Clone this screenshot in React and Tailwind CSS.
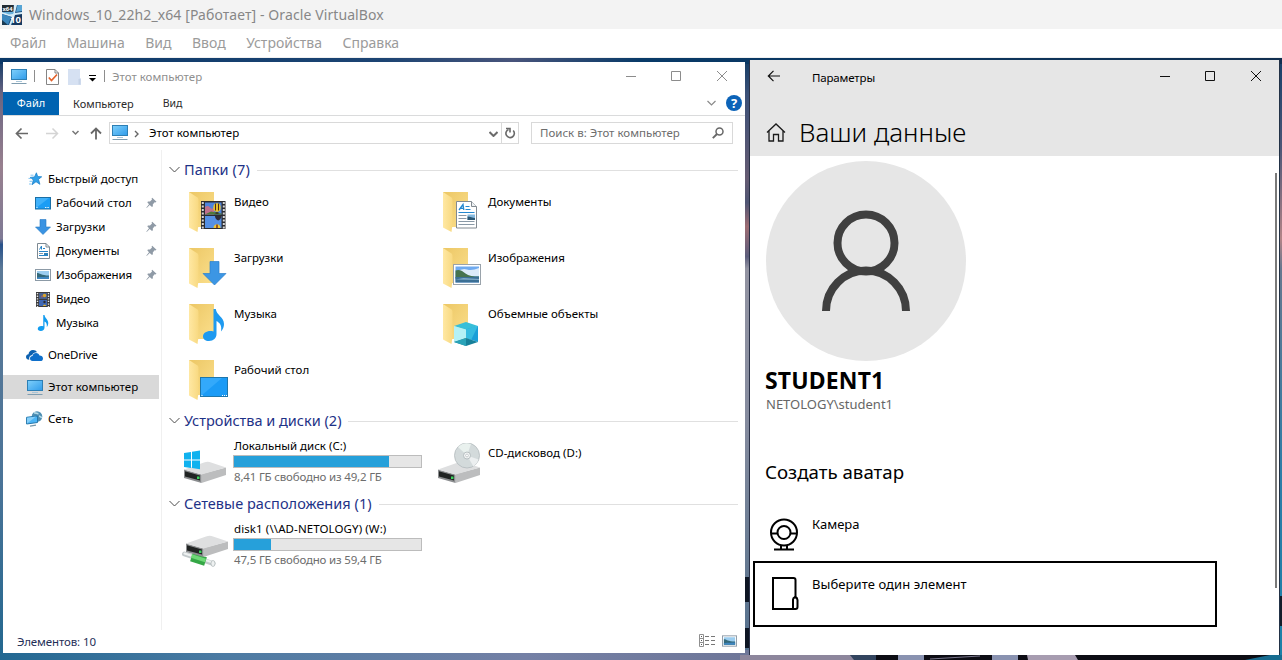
import React from "react";

/* ---------- small icons ---------- */

function PcIcon() {
  return (
    <svg width="18" height="17" viewBox="0 0 18 17" className="shrink-0">
      <defs>
        <linearGradient id="pcg" x1="0" y1="0" x2="1" y2="1">
          <stop offset="0" stopColor="#7fd0fb" />
          <stop offset="1" stopColor="#2f9bea" />
        </linearGradient>
      </defs>
      <rect x="1.500" y="1.500" width="15" height="10" fill="url(#pcg)" stroke="#2d7fb5" />
      <path d="M6 13.500h6" stroke="#a9c6d8" />
      <path d="M1.500 15.500h15" stroke="#7f9db0" />
    </svg>
  );
}

function VmIcon() {
  return (
    <svg width="20" height="20" viewBox="0 0 20 20" className="shrink-0">
      <rect width="20" height="20" fill="#1c4f80" />
      <path d="M12 0h3l-2 8 7-1v4l-8 1-3 8H7l3-8-10-3V7l10 2z" fill="#d5ecf8" />
      <path d="M0 9l9 3-3 8H0z" fill="#3c87bd" />
      <path d="M0 7h12l-1 2-4 .5z" fill="#69b2dd" />
      <path d="M15.500 0H20v6l-6 1z" fill="#57a5d5" />
      <path d="M13 10l7-1v11H10z" fill="#163a61" />
      <path d="M0 15l6 5H0z" fill="#1a3a52" />
      <rect width="11.500" height="6.500" fill="#232c33" />
      <text x="0.500" y="5.500" fontSize="5.800" fontWeight="700" fill="#fff" fontFamily="Noto Sans, sans-serif">x64</text>
      <text x="8" y="17.500" fontSize="9.500" fontWeight="700" fill="#fff" fontFamily="Noto Sans, sans-serif">10</text>
    </svg>
  );
}

function Pin() {
  return (
    <svg width="11" height="12" viewBox="0 0 11 12" className="shrink-0">
      <path d="M6.200 0.800L10.500 4.800 9.300 5.600 8.600 5.200 6.800 7.400 6.900 9.300 6 10 3.700 7.900 0.700 11 0.400 10.600 3 7.200 1.300 5.300 2 4.400 4 4.500 6 2.600 5.600 1.600Z" fill="#8f9aa6" />
    </svg>
  );
}

function StarIcon() {
  return (
    <svg width="16" height="14" viewBox="0 0 16 14" className="shrink-0">
      <path d="M9.400 0.800l1.300 3.800 4 .2-3.200 2.500 1.400 5-3.900-2.600-3.900 3 1.300-4.800L3.200 5.400l4.300-.4z" fill="#2f9fe8" stroke="#1d83cc" strokeWidth="0.800" />
      <path d="M3.500 3.200h3M1.500 6.400h3.500M2.500 9.300h3M2 12h2.500" stroke="#63b8f0" strokeWidth="0.800" />
    </svg>
  );
}

function DesktopIcon() {
  return (
    <svg width="16" height="13" viewBox="0 0 16 13" className="shrink-0">
      <rect x="0.500" y="0.500" width="15" height="11.500" fill="#1b9df5" stroke="#1a6fa6" />
      <path d="M1 11L14 1H1z" fill="#40b1fa" />
      <path d="M1.500 10.500h1M10 10.500h4" stroke="#e8f6ff" strokeDasharray="1 0.600" />
    </svg>
  );
}

function DownIcon() {
  return (
    <svg width="16" height="16" viewBox="0 0 16 16" className="shrink-0">
      <path d="M5 0.500h6v7.500h4.500L8 15.500.5 8H5z" fill="#3a93e2" stroke="#2678c4" strokeWidth="0.600" />
    </svg>
  );
}

function DocIcon() {
  return (
    <svg width="13" height="16" viewBox="0 0 13 16" className="shrink-0">
      <path d="M.5.500h8.500l3.500 3.500v11.500H.5z" fill="#fff" stroke="#7d8992" />
      <path d="M9 .5V4h3.500" fill="none" stroke="#7d8992" />
      <path d="M2.500 6.500L4.500 3v3.500M6 5.500h2M2 8.500h9M2 12.500h9" stroke="#2684c8" fill="none" />
      <path d="M2 10.500h4" stroke="#8a99a5" />
      <rect x="7" y="10" width="4" height="2" fill="#2f84ba" />
    </svg>
  );
}

function PictureIcon({ w = 16, h = 12 }) {
  return (
    <svg width={w} height={h} viewBox="0 0 16 12" className="shrink-0">
      <rect x="0.500" y="0.500" width="15" height="11" fill="#fff" stroke="#8c9aa6" />
      <rect x="2" y="2" width="12" height="8" fill="#9bcdf0" />
      <path d="M2 4c3 0 4 2.500 12 2.500V10H2z" fill="#33697a" />
      <path d="M2 8.500c5-1 8-.5 12-.8V10H2z" fill="#3f86c0" />
    </svg>
  );
}

function FilmIcon() {
  return (
    <svg width="14" height="15" viewBox="0 0 14 15" className="shrink-0">
      <rect width="14" height="15" fill="#3b3b3d" />
      <path d="M1.500 1v14M12.500 1v14" stroke="#e8e8e8" strokeWidth="1.400" strokeDasharray="1.300 1.300" />
      <rect x="3" y="1" width="8" height="6" fill="#47608f" />
      <rect x="3" y="8" width="8" height="6" fill="#4068b4" />
      <circle cx="8.500" cy="3.500" r="1.800" fill="#d9a62c" />
      <circle cx="6" cy="4.500" r="1.100" fill="#95606c" />
      <circle cx="8.500" cy="10" r="1.200" fill="#2b2b30" />
      <path d="M7 14c0-1.800 3-1.800 3 0z" fill="#e6b833" />
    </svg>
  );
}

function NoteIcon() {
  return (
    <svg width="12" height="16" viewBox="0 0 21 32" className="shrink-0">
      <path d="M11 0h2.500c.5 6 7.500 9 7.500 16 0 3-1 6-3 8 1-6-1-9-4.500-11v12c0 4-3 7-7.500 7C2 32 0 30 0 27.500c0-4 5-7 11-5z" fill="#119cf0" />
    </svg>
  );
}

function CloudIcon() {
  return (
    <svg width="17" height="11" viewBox="0 0 17 11" className="shrink-0">
      <path d="M3.300 9.700C1.200 9.700 0 8.600 0 7c0-1.500 1-2.500 2.500-2.700C2.700 1.700 4.600 0 7 0c1.900 0 3.200.9 4 2.300-2.300-.2-4 .8-4.800 2.600C4 5.200 2.600 7.200 3.300 9.700z" fill="#0d61b0" />
      <path d="M6.500 11C4.900 11 4 10 4 8.600c0-1.500 1-2.500 2.500-2.600C6.800 4.200 8.100 3 10 3c1.800 0 3 1 3.500 2.500C15.600 5.600 17 6.700 17 8.400c0 1.600-1 2.600-2.600 2.600z" fill="#0f6fca" />
    </svg>
  );
}

function NetIcon() {
  return (
    <svg width="17" height="16" viewBox="0 0 17 16" className="shrink-0">
      <circle cx="11" cy="5.500" r="5.300" fill="#4f8fb3" />
      <path d="M8 2c2-.5 3 1 4.500.5M13 5c1 0 1.500 1.500 3 1.500" stroke="#b5dbe9" strokeWidth="1.600" fill="none" />
      <path d="M.6 6.300L11.500 5v6.500L.6 13z" fill="#4db5f5" stroke="#2577ab" />
      <path d="M1 12.400L10 5.500l-9 1.200z" fill="#86cff9" />
      <path d="M4 15.200l6-1" stroke="#7897a8" strokeWidth="1.300" />
    </svg>
  );
}

function Chevron({ className, size = 8, stroke = 1.500 }) {
  return (
    <svg width={size} height={size / 2 + 2} viewBox={`0 0 ${size} ${size / 2 + 2}`} className={className}>
      <path d={`M0.500 1l${size / 2 - 0.500} ${size / 2 - 0.500} ${size / 2 - 0.500} -${size / 2 - 0.500}`} fill="none" stroke="currentColor" strokeWidth={stroke} />
    </svg>
  );
}

function Caption({ stroke, className }) {
  return (
    <svg width="102" height="12" viewBox="0 0 102 12" className={className}>
      <path d="M0 6.500h10M45.500 1.500h9v9h-9zM91 1l10 10M101 1L91 11" fill="none" stroke={stroke} />
    </svg>
  );
}

/* ---------- large icons ---------- */

function Folder({ children }) {
  return (
    <svg width="45" height="44" viewBox="0 0 45 44" className="shrink-0">
      <defs>
        <linearGradient id="fb" x1="0" y1="0" x2="1" y2="1">
          <stop offset="0" stopColor="#ecc765" />
          <stop offset="1" stopColor="#fbdf8c" />
        </linearGradient>
        <linearGradient id="ff" x1="0" y1="0" x2="1" y2="0">
          <stop offset="0" stopColor="#ffe8a3" />
          <stop offset="1" stopColor="#f8d981" />
        </linearGradient>
      </defs>
      <path d="M0 0h25v35H0z" fill="url(#fb)" />
      <path d="M0 0l8.500 5.500q1 .8 1 2.500v24.500l-1 7.500L0 35.500z" fill="url(#ff)" />
      {children}
    </svg>
  );
}

const overlays = {
  video: (
    <g>
      <rect x="12" y="9" width="24.500" height="28" fill="#2c2c30" />
      <path d="M13.800 10v27M34.800 10v27" stroke="#d7d7d7" strokeWidth="2" strokeDasharray="2 1.500" />
      <rect x="16" y="10.500" width="16.500" height="12" fill="#4f84dc" />
      <path d="M16 15q3-2 5 .5t4 0v7h-9z" fill="#c0708c" />
      <path d="M16 22.500l6-3 10.500 2v1z" fill="#4f7a3a" />
      <rect x="16" y="24" width="16.500" height="12" fill="#5590e4" />
      <ellipse cx="28" cy="15.500" rx="3.700" ry="4.300" fill="#f0c92d" />
      <path d="M26.500 11.500v7M29.500 11.500v7" stroke="#4a2a1e" strokeWidth="1.100" />
      <path d="M26.500 21h3" stroke="#3a2a1e" strokeWidth="1.500" />
      <path d="M26 24h6.500c0 2.500-2 4-3.200 4.500-1.500-.5-3.300-2-3.300-4.500z" fill="#2f2d39" />
      <path d="M24.500 36c0-5 7-5 7 0z" fill="#f0c832" />
      <path d="M28 32.500V36" stroke="#7b2f22" strokeWidth="1.500" />
    </g>
  ),
  down: <path d="M21 13.500h9v12h7L25.500 37 14 25.500h7z" fill="#3c96e4" stroke="#2a80cc" strokeWidth="0.700" />,
  music: (
    <path d="M24.500 5h2.300c.5 6 8.200 8 8.200 15 0 3-1 5-3 7.500 1-6-1-8.500-4.500-10.500v13c0 4-3 7-7.500 7-3.800 0-6-2-6-4.500 0-4 5-6.500 10.500-5z" fill="#1e9af0" />
  ),
  desktop: (
    <g>
      <rect x="11.500" y="17.500" width="27" height="19" fill="#1b9bf6" stroke="#1e76ab" />
      <path d="M12 36L33 18H12z" fill="#33a9fb" />
      <path d="M12.500 35.500h1M33 35.500h5.500" stroke="#fff" strokeDasharray="1 1" />
    </g>
  ),
  docs: (
    <g>
      <path d="M13.500 9.500h15l5 5v21.500h-20z" fill="#fff" stroke="#828a91" />
      <path d="M28.500 9.500v5h5" fill="#eef1f3" stroke="#828a91" />
      <path d="M16 18l4-5.500.8 5.500M17.500 16.300h3" fill="none" stroke="#2488d0" strokeWidth="1.300" />
      <path d="M22.500 14.500h4M22.500 17.500h5M15.500 20.500h16" stroke="#2488d0" />
      <path d="M15.500 23.500h8M15.500 26.500h8M15.500 29.500h16M15.500 32.500h16" stroke="#8a99a6" />
      <rect x="24.500" y="22.500" width="7.500" height="5.500" fill="#86b9de" />
      <path d="M24.500 24.500c3 0 5 1.500 7.500 1.500v2h-7.500z" fill="#2a5672" />
    </g>
  ),
  pics: (
    <g>
      <rect x="10.500" y="16.500" width="27" height="20" fill="#fff" stroke="#9aa3ab" />
      <rect x="12.500" y="18.500" width="23.500" height="16" fill="#6faaf0" />
      <path d="M14 24q5-4 10-2.500t12-1.500v8H14z" fill="#dcebfa" />
      <path d="M12.500 22.500c4-1.500 7 .5 10 3s8 3 13.500 3v2H12.500z" fill="#46734e" />
      <path d="M12.500 29H36v5.500H12.500z" fill="#3b6f95" />
      <path d="M12.500 31.500l8-1.500 15.500 1v1z" fill="#7fabc8" />
    </g>
  ),
  cube: (
    <g>
      <path d="M11 22l12-4 12 4-12 4z" fill="#37bfd8" />
      <path d="M11 22l12 3.500V34l-12 4z" fill="#b4f1f5" />
      <path d="M23 25.500L35 22v16l-12-4z" fill="#1a9fd8" />
      <path d="M23 25.500L35 22l-7 14-5-2z" fill="#36bce0" />
      <path d="M11 38l12-4 12 4-12 4z" fill="#16809a" />
      <path d="M11 38l12-4v8z" fill="#2aa3b8" />
    </g>
  ),
};

function DriveBody() {
  return (
    <g>
      <path d="M17.500 13L42 6.500V14L17.500 22z" fill="#bcbdbe" />
      <path d="M0 8.500l17.500 5V22L0 17z" fill="#8b8d8f" />
      <path d="M1 10.300l15 4.200v5L1 15.500z" fill="#202322" />
      <path d="M0 8.500L20 1.500Q24 0 27 1.500L42 6.500 17.500 13.500z" fill="#dedfe0" />
      <rect x="13" y="15.500" width="2.500" height="2.500" fill="#3ad25c" />
    </g>
  );
}

function DiskIcon() {
  return (
    <svg width="47" height="40" viewBox="0 0 47 40" className="shrink-0">
      <g transform="translate(2 13)"><DriveBody /></g>
      <path d="M2 5l7-1v7.500H2zM10 3.800L18 2.500v9h-8zM2 12.500h7V20l-7-1zM10 12.500h8v8.700L10 20z" fill="#10b2ef" />
    </svg>
  );
}

function CdIcon() {
  return (
    <svg width="47" height="44" viewBox="0 0 47 44" className="shrink-0">
      <g transform="translate(2 18)"><DriveBody /></g>
      <circle cx="31" cy="12.500" r="12.500" fill="#d3dadb" stroke="#b3babd" strokeWidth="0.800" />
      <path d="M31 12.500L22 4A12.500 12.500 0 0 1 35 1z" fill="#e9f1ee" />
      <path d="M31 12.500l11.500 4a12 12 0 0 1-5 7z" fill="#eceff0" />
      <circle cx="31" cy="12.500" r="3.500" fill="#f3f5f5" stroke="#a9b2b5" strokeWidth="0.800" />
      <circle cx="31" cy="12.500" r="1.400" fill="#fff" stroke="#a9b2b5" strokeWidth="0.600" />
    </svg>
  );
}

function NetDiskIcon() {
  return (
    <svg width="47" height="40" viewBox="0 0 47 40" className="shrink-0">
      <path d="M2.500 23L31 32.500" stroke="#c3cacc" strokeWidth="5" strokeLinecap="round" />
      <path d="M2.500 22.500L31 31.500" stroke="#eef1f1" strokeWidth="2" strokeLinecap="round" />
      <path d="M9.500 26l14 4.500" stroke="#35a746" strokeWidth="9" />
      <path d="M9.500 25l14 4.500" stroke="#6ed977" strokeWidth="3.500" />
      <g transform="translate(4 4)"><DriveBody /></g>
      <ellipse cx="31" cy="32.500" rx="2" ry="3" fill="#eef1f1" stroke="#aab3b5" strokeWidth="0.700" />
    </svg>
  );
}

/* ---------- desktop wallpaper ---------- */

function Wallpaper() {
  return (
    <svg width="1282" height="602" viewBox="0 58 1282 602" className="absolute inset-0">
      <defs>
        <linearGradient id="wl" x1="0" y1="0" x2="0" y2="1">
          <stop offset="0" stopColor="#0b3866" />
          <stop offset="0.060" stopColor="#6a6582" />
          <stop offset="0.180" stopColor="#98808f" />
          <stop offset="0.300" stopColor="#7f7a95" />
          <stop offset="0.310" stopColor="#28518a" />
          <stop offset="0.350" stopColor="#5c7a98" />
          <stop offset="0.700" stopColor="#4b7498" />
          <stop offset="1" stopColor="#22678f" />
        </linearGradient>
        <linearGradient id="wm" x1="0" y1="0" x2="0" y2="1">
          <stop offset="0" stopColor="#123b63" />
          <stop offset="0.060" stopColor="#3b5077" />
          <stop offset="0.200" stopColor="#655b72" />
          <stop offset="0.240" stopColor="#4f5573" />
          <stop offset="0.280" stopColor="#9c6b72" />
          <stop offset="0.330" stopColor="#5c5d7c" />
          <stop offset="0.350" stopColor="#9293a1" />
          <stop offset="0.600" stopColor="#858b9e" />
          <stop offset="0.850" stopColor="#657991" />
          <stop offset="1" stopColor="#53708e" />
        </linearGradient>
        <linearGradient id="wr" x1="0" y1="0" x2="0" y2="1">
          <stop offset="0" stopColor="#15406a" />
          <stop offset="0.150" stopColor="#4d5677" />
          <stop offset="0.300" stopColor="#b38487" />
          <stop offset="0.350" stopColor="#66788f" />
          <stop offset="0.700" stopColor="#2d7ea8" />
          <stop offset="1" stopColor="#1c81a8" />
        </linearGradient>
        <linearGradient id="wb" x1="0" y1="0" x2="1" y2="0">
          <stop offset="0" stopColor="#226892" />
          <stop offset="0.300" stopColor="#4c7ba3" />
          <stop offset="0.700" stopColor="#7480a5" />
          <stop offset="1" stopColor="#6e7698" />
        </linearGradient>
        <linearGradient id="wt" x1="0" y1="0" x2="1" y2="0">
          <stop offset="0" stopColor="#0a3868" />
          <stop offset="0.300" stopColor="#1c4473" />
          <stop offset="0.400" stopColor="#48547b" />
          <stop offset="0.500" stopColor="#083a68" />
          <stop offset="1" stopColor="#112f50" />
        </linearGradient>
      </defs>
      <rect x="0" y="58" width="10" height="602" fill="url(#wl)" />
      <rect x="740" y="58" width="20" height="602" fill="url(#wm)" />
      <rect x="1270" y="58" width="12" height="602" fill="url(#wr)" />
      <rect x="0" y="650" width="750" height="10" fill="url(#wb)" />
      <rect x="0" y="58" width="1282" height="6" fill="url(#wt)" />
      <path d="M745 577h5v25h-5zM745 628h5v20h-5z" fill="#0d1523" />
      <path d="M749.500 60v595" stroke="#2a3147" />
      <path d="M1279 596h3v30h-3z" fill="#141e2b" />
      <path d="M1279.500 60v595" stroke="#223246" />
      <rect x="740" y="655" width="542" height="5" fill="#0d0d14" />
      <path d="M740 655h110l25 5H740z" fill="#8d869c" />
      <path d="M850 655h26v5h-22z" fill="#33455f" />
      <path d="M898 655h26v5h-26zM992 655h26v5h-26z" fill="#8992b0" />
      <path d="M1027 655h48l3 5h-50z" fill="#a79cb0" />
      <path d="M930 659l50-3" stroke="#77758a" />
      <path d="M1245 660l25-5h12v5z" fill="#176d91" />
    </svg>
  );
}

/* ---------- explorer ---------- */

function NavRow({ icon, label, child, pin, active, className = "" }) {
  return (
    <div className={`flex h-6 w-[156px] shrink-0 items-center ${child ? "pl-8" : "pl-6"} ${active ? "bg-[#d9d9d9]" : ""} ${className}`}>
      <span className={`flex w-[21px] shrink-0 items-center justify-center ${child ? "pr-[5px]" : "pr-1.5"}`}>{icon}</span>
      <span className="grow whitespace-pre pb-px">{label}</span>
      {pin && <span className="pr-0.5"><Pin /></span>}
    </div>
  );
}

function GroupHeader({ children, className = "" }) {
  return (
    <div className={`flex h-5 items-center ${className}`}>
      <Chevron size={11} stroke={1} className="ml-[7px] mr-1 shrink-0 text-[#4d4d4d]" />
      <span className="whitespace-pre pb-0.5 text-[14.5px] leading-5 text-[#1e3287]">{children}</span>
      <div className="ml-[7px] h-px grow bg-[#e0e0e0]" />
    </div>
  );
}

function FolderTile({ kind, label }) {
  return (
    <div className="flex h-14 w-[254px] pl-[27px] pt-2">
      <Folder>{overlays[kind]}</Folder>
      <span className="mt-0.5 h-4 whitespace-pre leading-4">{label}</span>
    </div>
  );
}

function Usage({ title, info, used, titleClass }) {
  return (
    <div className="flex flex-col pl-[5px]">
      <span className={`h-[15px] whitespace-pre leading-[15px] ${titleClass}`}>{title}</span>
      <div className="-ml-px mt-0.5 h-[13px] w-[189px] border border-[#bcbcbc] bg-[#e6e6e6]">
        <div className="h-full bg-[#26a0da]" style={{ width: used }} />
      </div>
      <span className="mt-px h-4 whitespace-pre leading-4 tracking-[-0.18px] text-[#6d6d6d]">{info}</span>
    </div>
  );
}

function Explorer() {
  return (
    <section className="flex h-[591px] w-[742px] shrink-0 flex-col bg-white text-[11.5px] text-black">
      <header className="flex h-[30px] shrink-0 items-center pl-[7px] text-[#8f8f8f]">
        <span className="mb-0.5"><PcIcon /></span>
        <div className="mb-0.5 ml-1.5 h-3 w-px bg-[#8d8d8d]" />
        <svg width="13" height="16" viewBox="0 0 13 16" className="ml-[11px]">
          <path d="M.5.500h8.500l3.500 3.500v11.500H.5z" fill="#fff" stroke="#858585" />
          <path d="M9 .5V4h3.500" fill="none" stroke="#858585" />
          <path d="M2.800 8.500l2.700 3L11 5.500" fill="none" stroke="#e3622b" strokeWidth="1.700" />
        </svg>
        <svg width="13" height="16" viewBox="0 0 13 16" className="ml-[9px]">
          <path d="M0 0h12v9l1 1v6H0z" fill="#d6e1f2" />
          <path d="M10.500 15.500V10l2-.5v6z" fill="#c4d2e6" />
        </svg>
        <svg width="9" height="7" viewBox="0 0 9 7" className="ml-[7px] mt-0.5">
          <path d="M1 .5h7" stroke="#000" />
          <path d="M1 3h7L4.500 6.500z" fill="#000" />
        </svg>
        <div className="mb-0.5 ml-[7px] h-3 w-px bg-[#8d8d8d]" />
        <span className="ml-[7px] grow whitespace-pre">Этот компьютер</span>
        <Caption stroke="#8c8c8c" className="mb-0.5 mr-[17px]" />
      </header>

      <nav className="flex h-6 shrink-0 items-center border-b border-[#dadbdc] text-[#2b2b2b]">
        <span className="flex h-full w-14 items-center justify-center bg-[#0063b1] text-[11px] text-white">Файл</span>
        <span className="pl-3.5 pt-px text-[11px]">Компьютер</span>
        <span className="ml-[29px] grow pt-px text-[10.5px]">Вид</span>
        <Chevron size={9} stroke={1.200} className="mr-2.5 text-[#8a8a8a]" />
        <span className="mb-px mr-[3px] flex h-4 w-4 items-center justify-center rounded-full bg-[#0c63b8] text-[13px] font-bold leading-4 text-white">?</span>
      </nav>

      <div className="flex h-[34px] shrink-0 items-center">
        <svg width="106" height="14" viewBox="0 0 106 14" className="shrink-0" fill="none">
          <path d="M25 7.500H14M18.500 2.500l-5 5 5 5" stroke="#686868" strokeWidth="1.700" />
          <path d="M43 7.500h11M49.500 2.500l5 5-5 5" stroke="#d4d4d4" strokeWidth="1.500" />
          <path d="M69.500 5l3 3 3-3" stroke="#777" strokeWidth="1.500" />
          <path d="M93 13.500V3M88 7.500l5-5 5 5" stroke="#686868" strokeWidth="1.800" />
        </svg>
        <div className="flex h-[22px] w-[410px] items-center border border-[#d9d9d9] pl-px">
          <span className="mb-0.5"><PcIcon /></span>
          <svg width="6" height="8" viewBox="0 0 6 8" className="ml-[5px] mr-[9px] mt-px">
            <path d="M1 1l3 3-3 3" fill="none" stroke="#666" strokeWidth="1.400" />
          </svg>
          <span className="grow whitespace-pre">Этот компьютер</span>
          <Chevron size={9} stroke={2} className="mr-[3px] mt-0.5 text-[#6b6b6b]" />
          <div className="h-full w-px bg-[#d9d9d9]" />
          <svg width="16" height="14" viewBox="0 0 16 14" fill="none">
            <path d="M11.200 4.500A4.200 4.200 0 1 1 6.500 3.500" stroke="#686868" strokeWidth="1.600" />
            <path d="M4 2.500h4v4" stroke="#686868" strokeWidth="1.600" />
          </svg>
        </div>
        <div className="ml-3 flex h-[22px] w-[202px] items-center border border-[#d9d9d9] pl-2 text-[#6d6d6d]">
          <span className="grow whitespace-pre">Поиск в: Этот компьютер</span>
          <svg width="12" height="12" viewBox="0 0 12 12" fill="none" className="mr-2">
            <circle cx="7.500" cy="4.500" r="3.500" stroke="#686868" strokeWidth="1.500" />
            <path d="M5 7L.8 11.200" stroke="#686868" strokeWidth="1.900" />
          </svg>
        </div>
      </div>

      <div className="flex h-[480px] shrink-0">
        <aside className="flex w-[159px] shrink-0 flex-col border-r border-[#f0f0f0] pt-[17px]">
          <NavRow icon={<StarIcon />} label="Быстрый доступ" />
          <NavRow child pin icon={<DesktopIcon />} label="Рабочий стол" className="tracking-[0.06px]" />
          <NavRow child pin icon={<DownIcon />} label="Загрузки" />
          <NavRow child pin icon={<DocIcon />} label="Документы" />
          <NavRow child pin icon={<PictureIcon />} label="Изображения" className="tracking-[-0.06px]" />
          <NavRow child icon={<FilmIcon />} label="Видео" className="tracking-[-0.2px]" />
          <NavRow child icon={<NoteIcon />} label="Музыка" />
          <NavRow icon={<CloudIcon />} label="OneDrive" className="mt-2 tracking-[-0.2px]" />
          <NavRow active icon={<PcIcon />} label="Этот компьютер" className="mt-2" />
          <NavRow icon={<NetIcon />} label="Сеть" className="mt-2" />
        </aside>

        <main className="flex w-[576px] shrink-0 flex-col pt-2.5">
          <GroupHeader><span className="tracking-[0.1px]">Папки (7)</span></GroupHeader>
          <div className="mt-1 grid grid-cols-[254px_254px]">
            <FolderTile kind="video" label="Видео" />
            <FolderTile kind="docs" label="Документы" />
            <FolderTile kind="down" label="Загрузки" />
            <FolderTile kind="pics" label="Изображения" />
            <FolderTile kind="music" label="Музыка" />
            <FolderTile kind="cube" label="Объемные объекты" />
            <FolderTile kind="desktop" label="Рабочий стол" />
          </div>

          <GroupHeader className="mt-[3px]">Устройства и диски (2)</GroupHeader>
          <div className="flex h-[63px]">
            <div className="flex w-[254px] pl-5 pt-[7px]">
              <div className="pt-2.5"><DiskIcon /></div>
              <Usage title="Локальный диск (C:)" info="8,41 ГБ свободно из 49,2 ГБ" used="155px" />
            </div>
            <div className="flex w-[254px] pl-5 pt-3">
              <CdIcon />
              <span className="ml-[5px] mt-0.5 h-4 whitespace-pre leading-4">CD-дисковод (D:)</span>
            </div>
          </div>

          <GroupHeader><span className="tracking-[0.04px]">Сетевые расположения (1)</span></GroupHeader>
          <div className="flex pl-5 pt-[7px]">
            <div className="pt-2.5"><NetDiskIcon /></div>
            <Usage title={"disk1 (\\\\AD-NETOLOGY) (W:)"} info="47,5 ГБ свободно из 59,4 ГБ" used="37px" titleClass="tracking-[0.1px]" />
          </div>
        </main>
      </div>

      <footer className="flex h-[23px] shrink-0 items-center pl-3.5 text-[#1f2f58]">
        <span className="grow whitespace-pre tracking-[-0.12px]">Элементов: 10</span>
        <svg width="17" height="14" viewBox="0 0 17 14" fill="none" className="mb-0.5 mr-1.5">
          <path d="M.5.500h4v12h-4zM.5 4.500h4M.5 8.500h4" stroke="#8f8f8f" />
          <path d="M6 2.500h4M12 2.500h4M6 6.500h4M12 6.500h4M6 10.500h4M12 10.500h4" stroke="#777" />
          <path d="M2 2.500h1M2 6.500h1M2 10.500h1" stroke="#555" />
        </svg>
        <span className="mb-0.5 mr-2"><PictureIcon w={15} h={12} /></span>
      </footer>
    </section>
  );
}

/* ---------- settings ---------- */

function Settings() {
  return (
    <section className="-mt-0.5 flex h-[595px] w-[529px] shrink-0 flex-col bg-white text-black">
      <header className="flex h-24 shrink-0 flex-col bg-[#e6e6e6]">
        <div className="flex h-8 shrink-0 items-center pl-[17px] text-[11.5px]">
          <svg width="13" height="12" viewBox="0 0 13 12" fill="none">
            <path d="M13 6H1.500M6.500 .8L1.300 6l5.200 5.200" stroke="#111" strokeWidth="1.200" />
          </svg>
          <span className="ml-8 grow pt-1 tracking-[-0.15px]">Параметры</span>
          <Caption stroke="#111" className="mr-[17px]" />
        </div>
        <div className="flex h-20 shrink-0 items-center pl-4">
          <svg width="20" height="19" viewBox="0 0 20 19" fill="none">
            <path d="M1 9.500L10 1l9 8.500M3 8v10h4.500v-6.500h5V18H17V8" stroke="#1a1a1a" strokeWidth="1.300" />
          </svg>
          <h1 className="ml-[13px] whitespace-pre text-[26px] font-light leading-8">Ваши данные</h1>
        </div>
      </header>

      <div className="flex h-[499px]">
        <div className="flex w-[525px] flex-col pt-[5px]">
          <svg width="200" height="200" viewBox="0 0 200 200" fill="none" className="ml-4 shrink-0">
            <circle cx="100" cy="100" r="100" fill="#e6e6e6" />
            <circle cx="100" cy="82" r="28.500" stroke="#404040" strokeWidth="8" />
            <path d="M60 150a40 40.500 0 0 1 80 0" stroke="#404040" strokeWidth="8" />
          </svg>
          <h2 className="ml-[15px] mt-[5px] h-7 text-[23px] font-bold leading-7 tracking-[0.15px]">STUDENT1</h2>
          <p className="ml-4 mt-px h-[18px] text-[13px] leading-[18px] text-[#666]">NETOLOGY\student1</p>
          <h3 className="ml-[15px] mt-[47px] h-6 whitespace-pre text-[18.7px] leading-6">Создать аватар</h3>
          <div className="ml-[3px] mt-4 flex h-[61px] w-[464px] pl-4 pt-[15px] text-[13px]">
            <svg width="30" height="33" viewBox="0 0 30 33" fill="none" stroke="#000" strokeWidth="2" className="mt-[3px]">
              <circle cx="15" cy="14.500" r="13" />
              <circle cx="15" cy="14.500" r="6.500" />
              <path d="M2 15.500h6.500M21.500 15.500H28M12 27.500V31M18 27.500V31M5 31.500h20" />
            </svg>
            <span className="ml-[13px] h-[18px] leading-[18px]">Камера</span>
          </div>
          <div className="ml-[3px] flex h-[66px] w-[464px] border-2 border-black pl-[17px] pt-3 text-[13px]">
            <svg width="27" height="33" viewBox="0 0 27 33" fill="none" stroke="#000" strokeWidth="2" className="mt-0.5">
              <path d="M23.500 20V3Q23.500 1 21.500 1H1v31h20.500" />
              <path d="M21 32V22.500q0-1.500 2.200-2.500 2.300 1 2.300 3V30q0 2-2 2z" />
            </svg>
            <span className="ml-[13px] h-[18px] whitespace-pre leading-[18px] tracking-[0.08px]">Выберите один элемент</span>
          </div>
        </div>
        <div className="mt-[17px] h-[415px] w-0.5 bg-[#7a7a7a]" />
      </div>
    </section>
  );
}

export default function App() {
  return (
    <div className="flex h-[660px] w-[1282px] flex-col overflow-hidden bg-white font-['Noto_Sans',sans-serif]">
      <header className="flex h-[29px] shrink-0 items-center bg-[#f3f3f3] pl-0.5 text-sm text-[#878787]">
        <VmIcon />
        <span className="ml-[7px] whitespace-pre tracking-[0.1px]">Windows_10_22h2_x64 [Работает] - Oracle VirtualBox</span>
      </header>
      <nav className="flex h-[29px] shrink-0 items-center gap-[20.500px] border-b border-[#f0f0f0] pl-2.5 text-sm text-[#9b9b9b]">
        <span>Файл</span>
        <span>Машина</span>
        <span>Вид</span>
        <span>Ввод</span>
        <span>Устройства</span>
        <span>Справка</span>
      </nav>
      <div className="relative h-[602px] shrink-0">
        <Wallpaper />
        <div className="relative flex gap-[5px] pl-[3px] pt-1">
          <Explorer />
          <Settings />
        </div>
      </div>
    </div>
  );
}
